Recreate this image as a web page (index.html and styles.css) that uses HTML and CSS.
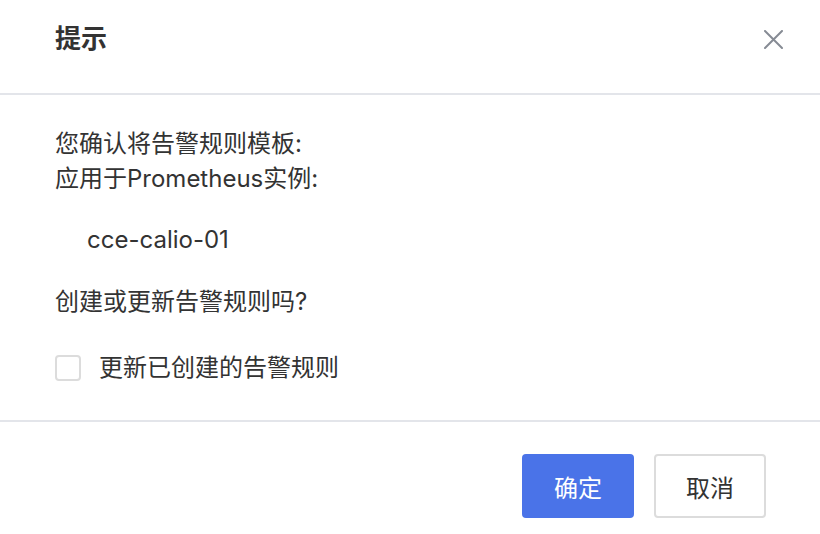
FILE: index.html
```html
<!DOCTYPE html>
<html lang="zh-CN">
<head>
<meta charset="utf-8">
<title>提示</title>
<link rel="stylesheet" href="styles.css">
</head>
<body>
<div class="dialog">
  <div class="header">
    <div class="title">提示</div>
    <button class="close" aria-label="关闭">
      <svg width="19" height="19" viewBox="0 0 19 19"><path d="M1 1L18 18M18 1L1 18" stroke="#868b94" stroke-width="2" stroke-linecap="round" fill="none"/></svg>
    </button>
  </div>
  <div class="body">
    <p class="line">您确认将告警规则模板:</p>
    <p class="line">应用于Prometheus实例:</p>
    <p class="line instance">cce-calio-01</p>
    <p class="line question">创建或更新告警规则吗?</p>
    <label class="check-row">
      <span class="checkbox"></span>
      <span class="check-label">更新已创建的告警规则</span>
    </label>
  </div>
  <div class="footer">
    <button class="btn btn-primary">确定</button>
    <button class="btn btn-default">取消</button>
  </div>
</div>
</body>
</html>
```
FILE: styles.css
```css
* { box-sizing: border-box; }
html, body { margin: 0; padding: 0; background: #fff; }
body {
  font-family: Inter, "Noto Sans CJK SC", sans-serif;
  color: #333;
}
.dialog { width: 820px; height: 534px; background: #fff; }
.header {
  height: 95px;
  border-bottom: 2px solid #e3e5ea;
  display: flex;
  justify-content: space-between;
  align-items: flex-start;
  padding: 21px 37px 0 55px;
}
.title {
  font-size: 26px;
  line-height: 36px;
  font-weight: 700;
  color: #333;
}
.close {
  border: none;
  background: none;
  padding: 0;
  margin-top: 9px;
  width: 19px;
  height: 19px;
  display: block;
}
.close svg { display: block; }
.body {
  height: 327px;
  border-bottom: 2px solid #e3e5ea;
  padding: 31px 55px 0 55px;
}
.line {
  margin: 0;
  font-size: 24px;
  line-height: 35px;
}
.instance { margin-top: 26px; padding-left: 32px; }
.question { margin-top: 27px; }
.check-row {
  margin-top: 31px;
  display: flex;
  align-items: center;
  height: 35px;
}
.checkbox {
  width: 26px;
  height: 26px;
  border: 2px solid #dcdcdc;
  border-radius: 4px;
  background: #fff;
  flex: none;
}
.check-label {
  margin-left: 18px;
  font-size: 24px;
  line-height: 35px;
}
.footer {
  display: flex;
  justify-content: flex-end;
  gap: 20px;
  padding: 32px 54px 0 0;
}
.btn {
  width: 112px;
  height: 64px;
  border-radius: 4px;
  font-family: Inter, "Noto Sans CJK SC", sans-serif;
  font-size: 24px;
  padding: 0;
}
.btn-primary {
  background: #4a73e8;
  border: none;
  color: #fff;
}
.btn-default {
  background: #fff;
  border: 2px solid #dcdcdc;
  color: #333;
}
```
